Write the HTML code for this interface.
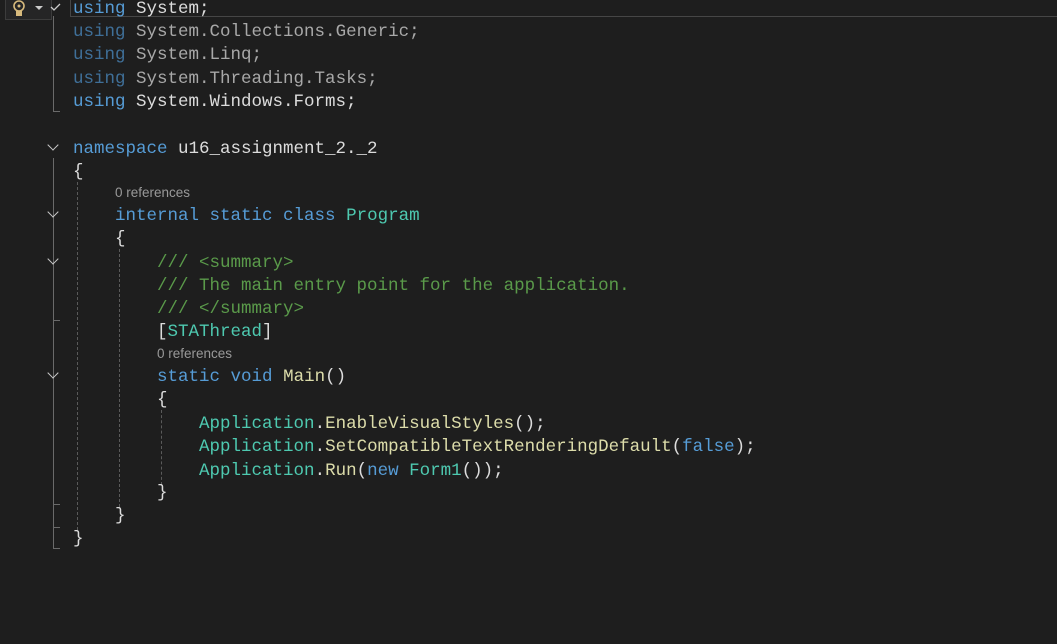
<!DOCTYPE html>
<html><head><meta charset="utf-8"><style>
body{margin:0;width:1057px;height:644px;background:#1e1e1e;overflow:hidden;position:relative;font-family:"Liberation Mono",monospace;}
.l{position:absolute;left:73px;height:23px;line-height:23px;font-size:17.5px;white-space:pre;color:#dcdcdc;}
.k{color:#569cd6}.t{color:#4ec9b0}.c{color:#5a9a4a}.m{color:#dcdcaa}
.dk{color:#3f6f98}.dt{color:#a8a8a8}
.ref{position:absolute;font-family:"Liberation Sans",sans-serif;font-size:13.5px;color:#999;}
.vs{position:absolute;width:1px;background:#6a6a6a;}
.hs{position:absolute;height:1px;width:7px;background:#6a6a6a;}
.dash{position:absolute;width:0;border-left:1px dashed #5a5a5a;}
.chev{position:absolute;width:7px;height:7px;border-right:1.5px solid #c8c8c8;border-bottom:1.5px solid #c8c8c8;transform:rotate(45deg);}
</style></head><body>
<div style="position:absolute;left:70px;top:-2px;width:990px;height:17px;border:1px solid #464646;border-right:none;"></div>
<div style="position:absolute;left:5px;top:-2px;width:45px;height:20px;border:1px solid #3c3c3c;background:#252526;"></div>
<svg style="position:absolute;left:10px;top:0" width="40" height="18"><circle cx="9" cy="6" r="5" fill="none" stroke="#d7ba7d" stroke-width="1.6"/><rect x="6" y="11" width="6" height="5" fill="#d7ba7d"/><circle cx="9" cy="6" r="1.5" fill="#d7ba7d"/><path d="M25 6 L33 6 L29 10 Z" fill="#ccc"/></svg>
<svg style="position:absolute;left:50px;top:2px" width="12" height="12"><path d="M1 5 L4 8 L10 2" fill="none" stroke="#ccc" stroke-width="1.3"/></svg>
<div class="vs" style="left:53px;top:16px;height:95px"></div><div class="hs" style="left:53px;top:111px"></div>
<div class="chev" style="left:49px;top:141px"></div>
<div class="vs" style="left:53px;top:158px;height:390px"></div><div class="hs" style="left:53px;top:548px"></div>
<div class="chev" style="left:49px;top:208px"></div>
<div class="chev" style="left:49px;top:255px"></div>
<div class="hs" style="left:53px;top:320px"></div>
<div class="chev" style="left:49px;top:369px"></div>
<div class="hs" style="left:53px;top:504px"></div><div class="hs" style="left:53px;top:527px"></div>
<div class="dash" style="left:77px;top:182px;height:348px"></div>
<div class="dash" style="left:119px;top:249px;height:258px"></div>
<div class="dash" style="left:161px;top:410px;height:75px"></div>

<div class="l" style="top:-2px"><span class="k">using</span> System;</div>
<div class="l" style="top:21px"><span class="dk">using</span> <span class="dt">System.Collections.Generic;</span></div>
<div class="l" style="top:44px"><span class="dk">using</span> <span class="dt">System.Linq;</span></div>
<div class="l" style="top:68px"><span class="dk">using</span> <span class="dt">System.Threading.Tasks;</span></div>
<div class="l" style="top:91px"><span class="k">using</span> System.Windows.Forms;</div>
<div class="l" style="top:138px"><span class="k">namespace</span> u16_assignment_2._2</div>
<div class="l" style="top:161px">{</div>
<div class="ref" style="left:115px;top:185px">0 references</div>
<div class="l" style="top:205px">    <span class="k">internal static class</span> <span class="t">Program</span></div>
<div class="l" style="top:228px">    {</div>
<div class="l c" style="top:252px">        /// &lt;summary&gt;</div>
<div class="l c" style="top:275px">        /// The main entry point for the application.</div>
<div class="l c" style="top:298px">        /// &lt;/summary&gt;</div>
<div class="l" style="top:321px">        [<span class="t">STAThread</span>]</div>
<div class="ref" style="left:157px;top:346px">0 references</div>
<div class="l" style="top:366px">        <span class="k">static void</span> <span class="m">Main</span>()</div>
<div class="l" style="top:389px">        {</div>
<div class="l" style="top:413px">            <span class="t">Application</span>.<span class="m">EnableVisualStyles</span>();</div>
<div class="l" style="top:436px">            <span class="t">Application</span>.<span class="m">SetCompatibleTextRenderingDefault</span>(<span class="k">false</span>);</div>
<div class="l" style="top:460px">            <span class="t">Application</span>.<span class="m">Run</span>(<span class="k">new</span> <span class="t">Form1</span>());</div>
<div class="l" style="top:482px">        }</div>
<div class="l" style="top:505px">    }</div>
<div class="l" style="top:528px">}</div>
</body></html>
